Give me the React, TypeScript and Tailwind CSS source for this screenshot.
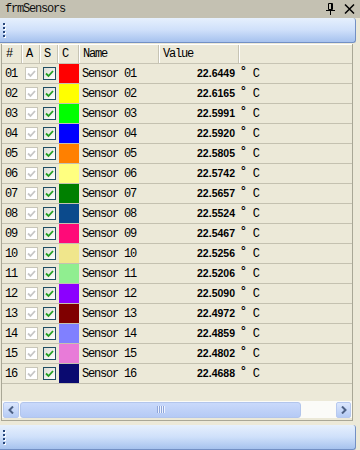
import React from 'react';

interface Sensor {
  id: string;
  color: string;
  value: string;
}

const SENSORS: Sensor[] = [
  { id: '01', color: '#ff0000', value: '22.6449' },
  { id: '02', color: '#ffff00', value: '22.6165' },
  { id: '03', color: '#00ff00', value: '22.5991' },
  { id: '04', color: '#0000ff', value: '22.5920' },
  { id: '05', color: '#ff8000', value: '22.5805' },
  { id: '06', color: '#ffff80', value: '22.5742' },
  { id: '07', color: '#008000', value: '22.5657' },
  { id: '08', color: '#0b4a8c', value: '22.5524' },
  { id: '09', color: '#ff0a78', value: '22.5467' },
  { id: '10', color: '#f0e68c', value: '22.5256' },
  { id: '11', color: '#90ee90', value: '22.5206' },
  { id: '12', color: '#8b00ff', value: '22.5090' },
  { id: '13', color: '#800000', value: '22.4972' },
  { id: '14', color: '#8080ff', value: '22.4859' },
  { id: '15', color: '#e87bd8', value: '22.4802' },
  { id: '16', color: '#0a0a70', value: '22.4688' },
];

const mono = "font-['Liberation_Mono','DejaVu_Sans_Mono',monospace] text-[12px] tracking-[-1.2px]";

function Grip() {
  return (
    <div className="flex flex-col gap-[2px] ml-[3px]">
      {[0, 1, 2, 3].map(i => (
        <span key={i} className="block w-[2px] h-[2px] bg-[#27477c] shadow-[1px_1px_0_#ffffff]" />
      ))}
    </div>
  );
}

function Toolbar() {
  return (
    <div className="w-[356px] h-[25px] flex items-center rounded-r-[3px] border-b border-r border-[#7390c4] bg-gradient-to-b from-[#e6f0fd] via-[#cfe0fa] to-[#a6c2ee]">
      <Grip />
    </div>
  );
}

function Check({ disabled }: { disabled?: boolean }) {
  return (
    <div
      className={`w-[13px] h-[13px] border flex items-center justify-center ${
        disabled ? 'border-[#c9c7ba] bg-white' : 'border-[#1f4d63] bg-gradient-to-br from-[#dcdcd5] to-white'
      }`}
    >
      <svg width="9" height="9" viewBox="0 0 9 9">
        <path
          d="M1 4.5 L3.5 7 L8 2"
          fill="none"
          stroke={disabled ? '#c6c6c6' : '#21a121'}
          strokeWidth="1.8"
        />
      </svg>
    </div>
  );
}

function HeaderCell({ w, label, last }: { w: string; label?: string; last?: boolean }) {
  return (
    <div className={`${w} h-full flex items-center pl-[4px] ${last ? '' : 'border-r border-[#c7c4b4] shadow-[1px_0_0_#ffffff]'}`}>
      {label && <span className={`${mono} text-black`}>{label}</span>}
    </div>
  );
}

export default function App() {
  return (
    <div className="w-[360px] h-[450px] bg-[#ece9d8] flex flex-col overflow-hidden">
      {/* caption */}
      <div className="h-[18px] bg-[#c4c1b2] flex items-center justify-between pl-[5px] pr-[5px]">
        <span className={`${mono} text-[#111]`}>frmSensors</span>
        <div className="flex items-center gap-[9px]">
          <svg width="9" height="12" viewBox="0 0 9 12">
            <path d="M2.5 0.5 H6.5 V6.5 H2.5 Z" fill="none" stroke="#000" />
            <path d="M5.5 1 V6.5" stroke="#000" />
            <path d="M0 7.5 H9" stroke="#000" />
            <path d="M4.5 8 V12" stroke="#000" />
          </svg>
          <svg width="11" height="10" viewBox="0 0 11 10">
            <path d="M1 0.5 L10 9.5 M10 0.5 L1 9.5" stroke="#000" strokeWidth="1.5" />
          </svg>
        </div>
      </div>

      <Toolbar />

      {/* grid */}
      <div className="flex-1 flex flex-col mt-[1px] ml-[1px] w-[352px] border-l border-r border-b border-[#a9a796] bg-[#ece9d8]">
        <div className="h-[20px] flex border-b border-[#c7c4b4] border-t border-t-white">
          <HeaderCell w="w-[20px]" label="#" />
          <HeaderCell w="w-[18px]" label="A" />
          <HeaderCell w="w-[18px]" label="S" />
          <HeaderCell w="w-[21px]" label="C" />
          <HeaderCell w="w-[80px]" label="Name" />
          <HeaderCell w="w-[80px]" label="Value" />
          <HeaderCell w="flex-1" last />
        </div>

        {SENSORS.map(s => (
          <div key={s.id} className="h-[20px] flex items-stretch border-b border-[#c4c1b0]">
            <div className={`w-[20px] flex items-center pl-[3px] ${mono} text-black`}>{s.id}</div>
            <div className="w-[18px] flex items-center justify-center">
              <Check disabled />
            </div>
            <div className="w-[18px] flex items-center justify-center">
              <Check />
            </div>
            <div className="w-[21px] pl-[1px]">
              <div className="h-full w-full" style={{ backgroundColor: s.color }} />
            </div>
            <div className={`w-[80px] flex items-center pl-[3px] ${mono} text-black`}>Sensor {s.id}</div>
            <div className="w-[80px] flex items-center justify-end pr-[4px] font-['Liberation_Sans',Arial,sans-serif] text-[10.5px] font-bold text-black">
              {s.value}
            </div>
            <div className="flex-1 flex items-center pl-[2px]">
              <span className="font-['Liberation_Sans',Arial,sans-serif] text-[12px] font-bold leading-none -mt-[5px] text-black">°</span>
              <span className={`${mono} text-black ml-[7px]`}>C</span>
            </div>
          </div>
        ))}

        <div className="flex-1" />

        {/* horizontal scrollbar */}
        <div className="h-[17px] flex items-center gap-[1px] px-[1px] bg-[#fbfbf8] mb-[2px]">
          <div className="w-[16px] h-[16px] rounded-[2px] border border-[#b7c9ef] bg-gradient-to-b from-[#dce7fd] to-[#b5cbf4] flex items-center justify-center">
            <svg width="6" height="8" viewBox="0 0 6 8">
              <path d="M5 0.5 L1.5 4 L5 7.5" fill="none" stroke="#4d6185" strokeWidth="2" />
            </svg>
          </div>
          <div className="flex-1 h-[16px] flex">
            <div className="w-[281px] h-full rounded-[3px] border border-[#b2c5ec] bg-gradient-to-b from-[#c9d9fb] to-[#b5caf5] flex items-center justify-center gap-[1px]">
              {[0, 1, 2, 3].map(i => (
                <span key={i} className="block w-[1px] h-[7px] bg-[#8fa6d9] shadow-[1px_0_0_#eef3ff]" />
              ))}
            </div>
          </div>
          <div className="w-[15px] h-[16px] rounded-[2px] border border-[#b7c9ef] bg-gradient-to-b from-[#dce7fd] to-[#b5cbf4] flex items-center justify-center">
            <svg width="6" height="8" viewBox="0 0 6 8">
              <path d="M1 0.5 L4.5 4 L1 7.5" fill="none" stroke="#4d6185" strokeWidth="2" />
            </svg>
          </div>
        </div>
      </div>

      <div className="h-[4px]" />
      <Toolbar />
    </div>
  );
}
